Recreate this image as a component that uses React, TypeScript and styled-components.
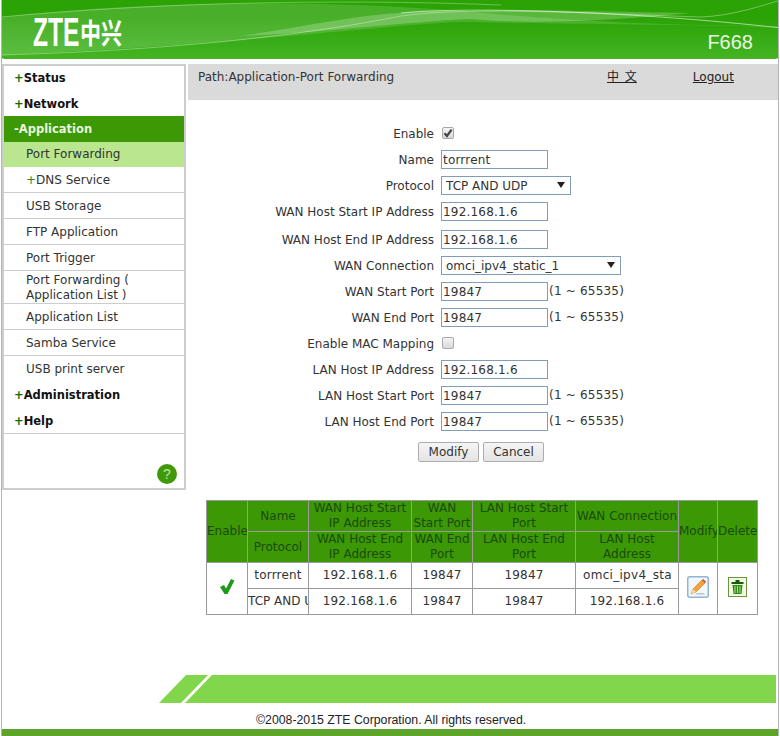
import styled, { createGlobalStyle } from "styled-components";

const GlobalStyle = createGlobalStyle`
  html, body {
    margin: 0;
    padding: 0;
    background: #fff;
  }
  body {
    font-family: "DejaVu Sans", Verdana, sans-serif;
    font-size: 12px;
    color: #333;
  }
`;

const Page = styled.div`
  width: 778px;
  height: 736px;
  margin-left: 1px;
  box-sizing: border-box;
  display: flex;
  flex-direction: column;
  overflow: hidden;
  border-left: 1px solid #b5b5b5;
  border-right: 1px solid #b5b5b5;
`;

const Header = styled.header`
  position: relative;
  flex: none;
  height: 59px;
  margin: 0 -1px 0 -1px;
  background: linear-gradient(#2ba305 0%, #2ba305 30%, #3aae1a 75%, #44b521 100%);
  border-radius: 0 0 4px 4px;
  overflow: hidden;
`;

const Swoosh = styled.svg`
  position: absolute;
  inset: 0;
`;

const Logo = styled.div`
  position: absolute;
  left: 32px;
  top: 13px;
  display: flex;
  color: #fff;
`;

const LogoLatin = styled.span`
  display: block;
  width: 47px;
  font: 700 41px/38px "Liberation Sans", sans-serif;
  transform: scaleX(0.6);
  transform-origin: left center;
  white-space: nowrap;
`;

const LogoHan = styled.span`
  display: block;
  font: 700 21px/38px "Noto Sans CJK SC", sans-serif;
  transform: scaleY(1.36);
  white-space: nowrap;
`;

const Model = styled.div`
  position: absolute;
  right: 26px;
  top: 30px;
  font: 20px/24px "Liberation Sans", sans-serif;
  color: #e9f6e3;
`;

const Body = styled.div`
  flex: 1;
  display: flex;
  align-items: flex-start;
  padding: 5px 0 0 0;
`;

const Sidebar = styled.nav`
  position: relative;
  flex: none;
  display: flex;
  flex-direction: column;
  width: 180px;
  height: 422px;
  margin-right: 2px;
  border: 2px solid #cdcdcd;
`;

const MenuTop = styled.a<{ $active?: boolean }>`
  display: flex;
  align-items: center;
  flex: none;
  height: ${(p) => (p.$active ? "24px" : "25px")};
  padding: 1px 0 0 10px;
  box-sizing: content-box;
  font-weight: 700;
  font-size: 11.5px;
  color: ${(p) => (p.$active ? "#e8f4df" : "#111")};
  background: ${(p) => (p.$active ? "#3c9804" : "#fff")};
  border-bottom: 1px solid ${(p) => (p.$active ? "#3c9804" : "#cdcdcd")};
  margin-top: -1px;
  &:first-child {
    margin-top: 0;
    padding-top: 0;
    height: 24px;
  }
`;

const Plus = styled.span`
  color: #0f6a0f;
  letter-spacing: -1px;
  margin-right: 1px;
`;

const SubPlus = styled.span`
  color: #2c8a2c;
`;

const MenuSub = styled.a<{ $active?: boolean; $tall?: boolean }>`
  display: flex;
  align-items: center;
  flex: none;
  height: ${(p) => (p.$tall ? "31px" : p.$active ? "23px" : "24px")};
  padding: 1px 0 0 22px;
  line-height: 15px;
  font-size: 12px;
  color: #333;
  background: ${(p) => (p.$active ? "#b9e68f" : "#fff")};
  border-bottom: 1px solid ${(p) => (p.$active ? "#b9e68f" : "#cdcdcd")};
`;

const HelpBadge = styled.span`
  position: absolute;
  right: 7px;
  bottom: 4px;
  width: 20px;
  height: 20px;
  border-radius: 50%;
  background: #3f9a0a;
  color: #bfe3a5;
  font: 14px/20px "Liberation Sans", sans-serif;
  text-align: center;
`;

const Content = styled.main`
  flex: 1;
  min-width: 0;
`;

const PathBar = styled.div`
  height: 36px;
  box-sizing: border-box;
  padding-top: 6px;
  display: flex;
  background: #dadada;
  line-height: 15px;
`;

const PathText = styled.span`
  width: 419px;
  padding-left: 10px;
  box-sizing: border-box;
`;

const BarLink = styled.a<{ $wide?: boolean }>`
  color: #222;
  text-decoration: underline;
  margin-right: ${(p) => (p.$wide ? "56px" : "0")};
  word-spacing: ${(p) => (p.$wide ? "2px" : "0")};
  font-family: "DejaVu Sans", "Noto Sans CJK SC", sans-serif;
`;

const Form = styled.form`
  padding-top: 23px;
`;

const Row = styled.div<{ $gap?: number }>`
  display: flex;
  align-items: center;
  height: 20px;
  margin-bottom: ${(p) => p.$gap ?? 6}px;
`;

const Label = styled.label`
  width: 246px;
  margin-right: 7px;
  padding-top: 1px;
  text-align: right;
  white-space: nowrap;
`;

const TextInput = styled.input`
  width: 107px;
  height: 19px;
  box-sizing: border-box;
  padding: 1px 1px 0;
  border: 1px solid #7f9db9;
  font: 12px "DejaVu Sans", sans-serif;
  letter-spacing: 0.2px;
  color: #333;
`;

const Hint = styled.span`
  margin-left: 1px;
  letter-spacing: 0.2px;
`;

const SelectBox = styled.div<{ $width: number }>`
  position: relative;
  width: ${(p) => p.$width}px;
  height: 19px;
  &::after {
    content: "";
    position: absolute;
    right: 6px;
    top: 6px;
    border-style: solid;
    border-width: 6px 4px 0;
    border-color: #222 transparent transparent;
    pointer-events: none;
  }
`;

const Select = styled.select`
  appearance: none;
  width: 100%;
  height: 100%;
  box-sizing: border-box;
  padding: 1px 0 0 4px;
  border: 1px solid #7f9db9;
  border-radius: 0;
  background: #fff;
  font: 12px "DejaVu Sans", sans-serif;
  color: #333;
`;

const CheckBox = styled.span`
  display: inline-flex;
  align-items: center;
  justify-content: center;
  width: 12px;
  height: 12px;
  margin-left: 1px;
  box-sizing: border-box;
  border: 1px solid #a9a9a9;
  border-radius: 2px;
  background: linear-gradient(#f4f4f4, #d9d9d9);
`;

const Actions = styled.div`
  display: flex;
  gap: 4px;
  padding-left: 230px;
  margin-top: 11px;
`;

const Button = styled.button`
  width: 61px;
  height: 20px;
  padding: 0;
  border: 1px solid #adadad;
  border-radius: 2px;
  background: linear-gradient(#f5f5f5, #e4e4e4);
  font: 12px "DejaVu Sans", sans-serif;
  color: #333;
`;

const Table = styled.table`
  margin: 38px 0 0 18px;
  border-collapse: collapse;
  table-layout: fixed;
  width: 551px;
  font-size: 12px;
  line-height: 15px;
  color: #333;
`;

const Th = styled.th`
  border: 1px solid #9a9a9a;
  background: #3c9804;
  color: #1a4a0e;
  font-weight: 400;
  padding: 0;
  height: 30px;
  text-align: center;
  overflow: hidden;
`;

const Td = styled.td`
  border: 1px solid #9a9a9a;
  height: 25px;
  padding: 0;
  text-align: center;
  white-space: nowrap;
  overflow: hidden;
  letter-spacing: 0.2px;
`;

const Clip = styled.div`
  overflow: hidden;
  white-space: nowrap;
  letter-spacing: 0;
`;

const ClipField = styled(Clip)`
  width: 88px;
  margin-left: 7px;
  text-align: left;
  letter-spacing: 0.3px;
`;

const Footer = styled.footer`
  flex: none;
`;

const Stripe = styled.div`
  display: flex;
  height: 28px;
  padding: 0 2px 0 156px;
`;

const StripeSvg = styled.svg`
  flex: none;
`;

const StripeFill = styled.div`
  flex: 1;
  background: #82d64c;
`;

const Copyright = styled.div`
  height: 26px;
  box-sizing: border-box;
  padding: 9px 0 0 254px;
  font: 12.3px/17px "Liberation Sans", sans-serif;
  color: #222;
`;

const BottomBar = styled.div`
  height: 7px;
  margin-right: -1px;
  background: #5da52a;
`;

const Tick = () => (
  <svg width="10" height="10" viewBox="0 0 10 10">
    <path d="M1.5 5.2 L4 8 L8.6 1.6" fill="none" stroke="#444" strokeWidth="2.2" />
  </svg>
);

const PencilIcon = () => (
  <svg width="22" height="22" viewBox="0 0 22 22">
    <rect x="0.75" y="0.75" width="20.5" height="20.5" rx="2" fill="#f2f7fb" stroke="#8fb6d6" strokeWidth="1.5" />
    <path d="M4 18 L6 13 L15 4 L18 7 L9 16 Z" fill="#f2a33a" stroke="#c96f1c" strokeWidth="0.6" />
    <path d="M15 4 L16.2 2.9 L19.1 5.8 L18 7 Z" fill="#d8483c" />
    <path d="M4 18 L6 13 L9 16 Z" fill="#f3dcb5" />
    <path d="M8 18.5 L18 18.5 L17 17 L10 17 Z" fill="#b9c6cf" />
  </svg>
);

const TrashIcon = () => (
  <svg width="19" height="20" viewBox="0 0 19 20">
    <rect x="0.5" y="0.5" width="18" height="19" fill="#f1f8e6" stroke="#6c9440" />
    <path d="M7.5 3 H11.5 V5 H7.5 Z M3.5 5 H15.5 V7 H3.5 Z" fill="#1a5c0c" />
    <path d="M4.5 8 H14.5 L13.5 17 H5.5 Z" fill="#2f8a16" />
    <path d="M7 9 V16 M9.5 9 V16 M12 9 V16" stroke="#b9e28f" strokeWidth="1" />
  </svg>
);

const topBefore = ["Status", "Network"];
const subs = ["USB Storage", "FTP Application", "Port Trigger"];
const subsAfter = ["Application List", "Samba Service", "USB print server"];

export default function App() {
  return (
    <Page>
      <GlobalStyle />
      <Header>
        <Swoosh width="780" height="59" viewBox="0 0 780 59">
          <path d="M0 17 C140 2 300 -2 470 12 C540 18 640 26 780 26 L780 27 C640 24 540 24 470 22 C400 22 260 44 0 55 Z" fill="#ffffff" opacity="0.14" />
          <path d="M0 17 C140 4 320 -2 500 5" fill="none" stroke="#ffffff" strokeOpacity="0.3" />
          <path d="M0 55 C180 50 310 34 400 16 C470 6 600 14 700 17 C730 16 760 6 780 0" fill="none" stroke="#ffffff" strokeOpacity="0.35" />
          <path d="M400 13 C470 6 640 12 780 28" fill="none" stroke="#ffffff" strokeOpacity="0.55" />
          <path d="M240 36 C320 24 380 8 470 11 C540 9 600 12 690 13 C600 22 520 24 470 19 C400 22 330 32 240 36 Z" fill="#ffffff" opacity="0.22" />
        </Swoosh>
        <Logo>
          <LogoLatin>ZTE</LogoLatin>
          <LogoHan>中兴</LogoHan>
        </Logo>
        <Model>F668</Model>
      </Header>
      <Body>
        <Sidebar>
          {topBefore.map((item) => (
            <MenuTop key={item}>
              <Plus>+</Plus>
              {item}
            </MenuTop>
          ))}
          <MenuTop $active>-Application</MenuTop>
          <MenuSub $active>Port Forwarding</MenuSub>
          <MenuSub>
            <SubPlus>+</SubPlus>DNS Service
          </MenuSub>
          {subs.map((item) => (
            <MenuSub key={item}>{item}</MenuSub>
          ))}
          <MenuSub $tall>
            Port Forwarding (
            <br />
            Application List )
          </MenuSub>
          {subsAfter.map((item) => (
            <MenuSub key={item}>{item}</MenuSub>
          ))}
          <MenuTop>
            <Plus>+</Plus>Administration
          </MenuTop>
          <MenuTop>
            <Plus>+</Plus>Help
          </MenuTop>
          <HelpBadge>?</HelpBadge>
        </Sidebar>
        <Content>
          <PathBar>
            <PathText>Path:Application-Port Forwarding</PathText>
            <BarLink $wide>中 文</BarLink>
            <BarLink>Logout</BarLink>
          </PathBar>
          <Form>
            <Row>
              <Label>Enable</Label>
              <CheckBox>
                <Tick />
              </CheckBox>
            </Row>
            <Row>
              <Label>Name</Label>
              <TextInput defaultValue="torrrent" />
            </Row>
            <Row>
              <Label>Protocol</Label>
              <SelectBox $width={130}>
                <Select defaultValue="both">
                  <option value="both">TCP AND UDP</option>
                </Select>
              </SelectBox>
            </Row>
            <Row $gap={8}>
              <Label>WAN Host Start IP Address</Label>
              <TextInput defaultValue="192.168.1.6" />
            </Row>
            <Row>
              <Label>WAN Host End IP Address</Label>
              <TextInput defaultValue="192.168.1.6" />
            </Row>
            <Row>
              <Label>WAN Connection</Label>
              <SelectBox $width={180}>
                <Select defaultValue="omci">
                  <option value="omci">omci_ipv4_static_1</option>
                </Select>
              </SelectBox>
            </Row>
            <Row>
              <Label>WAN Start Port</Label>
              <TextInput defaultValue="19847" />
              <Hint>(1 ~ 65535)</Hint>
            </Row>
            <Row>
              <Label>WAN End Port</Label>
              <TextInput defaultValue="19847" />
              <Hint>(1 ~ 65535)</Hint>
            </Row>
            <Row>
              <Label>Enable MAC Mapping</Label>
              <CheckBox />
            </Row>
            <Row>
              <Label>LAN Host IP Address</Label>
              <TextInput defaultValue="192.168.1.6" />
            </Row>
            <Row>
              <Label>LAN Host Start Port</Label>
              <TextInput defaultValue="19847" />
              <Hint>(1 ~ 65535)</Hint>
            </Row>
            <Row>
              <Label>LAN Host End Port</Label>
              <TextInput defaultValue="19847" />
              <Hint>(1 ~ 65535)</Hint>
            </Row>
            <Actions>
              <Button type="button">Modify</Button>
              <Button type="button">Cancel</Button>
            </Actions>
          </Form>
          <Table>
            <colgroup>
              <col width="41" />
              <col width="61" />
              <col width="103" />
              <col width="61" />
              <col width="103" />
              <col width="103" />
              <col width="39" />
              <col width="40" />
            </colgroup>
            <thead>
              <tr>
                <Th rowSpan={2}>Enable</Th>
                <Th>Name</Th>
                <Th>
                  WAN Host Start
                  <br />
                  IP Address
                </Th>
                <Th>
                  WAN
                  <br />
                  Start Port
                </Th>
                <Th>
                  LAN Host Start
                  <br />
                  Port
                </Th>
                <Th>WAN Connection</Th>
                <Th rowSpan={2}>Modify</Th>
                <Th rowSpan={2}>Delete</Th>
              </tr>
              <tr>
                <Th>Protocol</Th>
                <Th>
                  WAN Host End
                  <br />
                  IP Address
                </Th>
                <Th>
                  WAN End
                  <br />
                  Port
                </Th>
                <Th>
                  LAN Host End
                  <br />
                  Port
                </Th>
                <Th>
                  LAN Host
                  <br />
                  Address
                </Th>
              </tr>
            </thead>
            <tbody>
              <tr>
                <Td rowSpan={2}>
                  <svg width="16" height="17" viewBox="0 0 16 17">
                    <path d="M1 9 L5 7 L7 10.5 L12 1 L15.5 2.5 L8.5 16 L5.5 16 Z" fill="#1f9a1a" />
                  </svg>
                </Td>
                <Td>torrrent</Td>
                <Td>192.168.1.6</Td>
                <Td>19847</Td>
                <Td>19847</Td>
                <Td>
                  <ClipField>omci_ipv4_static_1</ClipField>
                </Td>
                <Td rowSpan={2}>
                  <PencilIcon />
                </Td>
                <Td rowSpan={2}>
                  <TrashIcon />
                </Td>
              </tr>
              <tr>
                <Td>
                  <Clip>TCP AND UDP</Clip>
                </Td>
                <Td>192.168.1.6</Td>
                <Td>19847</Td>
                <Td>19847</Td>
                <Td>192.168.1.6</Td>
              </tr>
            </tbody>
          </Table>
        </Content>
      </Body>
      <Footer>
        <Stripe>
          <StripeSvg width="54" height="28" viewBox="0 0 54 28">
            <path d="M1 28 L28 0 L50 0 L23 28 Z" fill="#82d64c" />
            <path d="M27 28 L54 0 L54 28 Z" fill="#82d64c" />
          </StripeSvg>
          <StripeFill />
        </Stripe>
        <Copyright>©2008-2015 ZTE Corporation. All rights reserved.</Copyright>
        <BottomBar />
      </Footer>
    </Page>
  );
}
